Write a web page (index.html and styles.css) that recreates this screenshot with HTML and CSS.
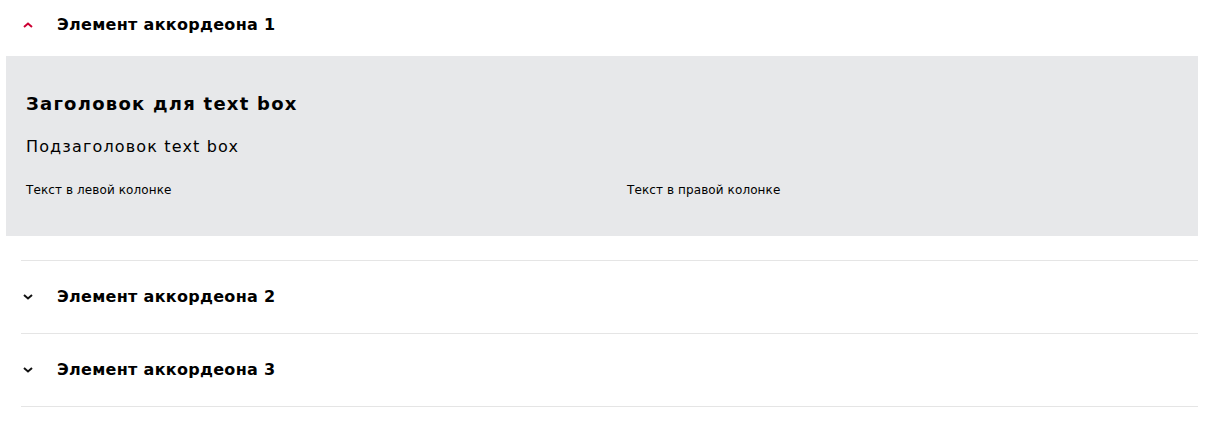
FILE: index.html
```html
<!DOCTYPE html>
<html lang="ru">
<head>
<meta charset="utf-8">
<title>Аккордеон</title>
<link rel="stylesheet" href="styles.css">
</head>
<body>
<div class="accordion">
  <div class="item item--open">
    <div class="item__header item__header--open">
      <svg class="chev chev--up" width="10" height="6" viewBox="0 0 10 6"><path d="M1 5 L5 1.5 L9 5" fill="none" stroke="currentColor" stroke-width="2"/></svg>
      <span class="item__title">Элемент аккордеона 1</span>
    </div>
    <div class="panel">
      <h2 class="panel__title">Заголовок для text box</h2>
      <p class="panel__sub">Подзаголовок text box</p>
      <div class="panel__cols">
        <p class="panel__text">Текст в левой колонке</p>
        <p class="panel__text">Текст в правой колонке</p>
      </div>
    </div>
  </div>
  <div class="item">
    <div class="item__header">
      <svg class="chev" width="10" height="6" viewBox="0 0 10 6"><path d="M1 1 L5 4.5 L9 1" fill="none" stroke="currentColor" stroke-width="2"/></svg>
      <span class="item__title">Элемент аккордеона 2</span>
    </div>
  </div>
  <div class="item">
    <div class="item__header">
      <svg class="chev" width="10" height="6" viewBox="0 0 10 6"><path d="M1 1 L5 4.5 L9 1" fill="none" stroke="currentColor" stroke-width="2"/></svg>
      <span class="item__title">Элемент аккордеона 3</span>
    </div>
  </div>
</div>
</body>
</html>
```
FILE: styles.css
```css
html, body {
  margin: 0;
  padding: 0;
  background: #fff;
}
body {
  font-family: "DejaVu Sans", "Noto Sans", sans-serif;
  color: #000;
}
.accordion {
  margin: 0 12px 0 21px;
}
.item {
  border-bottom: 1px solid #e5e5e5;
}
.item--open {
  padding-bottom: 24px;
}
.item__header {
  display: flex;
  align-items: center;
  height: 72px;
}
.item__header--open {
  height: 50px;
  margin-bottom: 6px;
}
.chev {
  display: block;
  margin-left: 2px;
  width: 10px;
  height: 6px;
  color: #111;
  flex: none;
}
.chev--up {
  color: #cc0033;
}
.item__title {
  margin-left: 24px;
  font-size: 16px;
  line-height: 20px;
  font-weight: 700;
  letter-spacing: 0.3px;
}
.panel {
  margin-left: -15px;
  background: #e7e8ea;
  padding: 36px 20px 38px;
}
.panel__title {
  margin: 0;
  font-size: 18px;
  line-height: 24px;
  font-weight: 700;
  letter-spacing: 1.25px;
}
.panel__sub {
  margin: 20px 0 0;
  font-size: 16px;
  line-height: 22px;
  font-weight: 400;
  letter-spacing: 1.15px;
}
.panel__cols {
  display: grid;
  grid-template-columns: 1fr 1fr;
  column-gap: 50px;
  margin-top: 24px;
}
.panel__text {
  margin: 0;
  font-size: 12px;
  line-height: 16px;
  letter-spacing: 0.1px;
}
```
